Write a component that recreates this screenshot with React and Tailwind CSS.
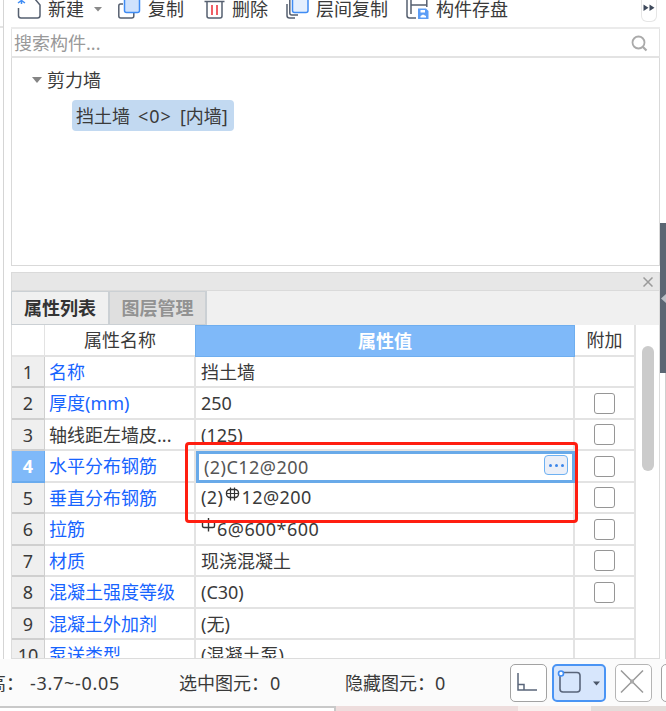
import clsx from "clsx";

const rows = [
    { id: 1, name: "名称", value: "挡土墙", link: true },
    { id: 2, name: "厚度(mm)", value: "250", link: true, check: true },
    { id: 3, name: "轴线距左墙皮...", value: "(125)", check: true },
    { id: 4, name: "水平分布钢筋", value: "(2)C12@200", link: true, check: true, editing: true },
    { id: 5, name: "垂直分布钢筋", prefix: "(2)", bar: "C", value: "12@200", link: true, check: true },
    { id: 6, name: "拉筋", bar: "A", value: "6@600*600", link: true, check: true },
    { id: 7, name: "材质", value: "现浇混凝土", link: true, check: true },
    { id: 8, name: "混凝土强度等级", value: "(C30)", link: true, check: true },
    { id: 9, name: "混凝土外加剂", value: "(无)", link: true },
    { id: 10, name: "泵送类型", value: "(混凝土泵)", link: true },
];

// rebar grade symbol, A is plain round bar and C is ribbed
function RebarIcon({ type }) {
    return (
        <svg width="15" height="16" viewBox="0 0 15 16" fill="none" stroke="#333" strokeWidth="1.4" className="mb-[7px] mr-px shrink-0">
            {type === "C" ? (
                <>
                    <rect x="1.500" y="3.500" width="12" height="8" rx="3.500" />
                    <path d="M5.5 1.500v13M9.500 1.500v13M1 7.500h13" strokeWidth="1.2" />
                </>
            ) : (
                <>
                    <path d="M1.500 4.500h12V9q0 1.500-1.500 1.500H3Q1.500 10.500 1.500 9z" />
                    <path d="M7.500 1v13.500" />
                </>
            )}
        </svg>
    );
}

function Toolbar() {
    return (
        <div className="flex h-[29px] shrink-0 items-start border-b-2 border-[#ebebeb] leading-[18px]">
            <svg width="24" height="20" className="ml-[6px] shrink-0" fill="none" stroke="#566070" strokeWidth="1.5">
                <path d="M1.5 8v7.500q0 2.500 2.500 2.500H20.500q2.500 0 2.500-2.500V5L18-1H12" />
                <path d="M4.500-4v8M1-2l7 5M8-2L1 3" stroke="#3f8cf4" />
            </svg>
            <span className="ml-[7px] w-[37px]">新建</span>
            <svg width="8" height="20" className="ml-[9px] shrink-0" fill="#8a8a8a">
                <path d="M0 7h8l-4 4.500z" />
            </svg>
            <svg width="24" height="20" className="ml-[16px] shrink-0" fill="none" strokeWidth="1.500">
                <path d="M5 4H2.500Q.8 4 .8 6v10q0 2 2 2h11q2 0 2-2v-3" stroke="#566070" />
                <rect x="6.500" y="-4" width="15" height="16.500" rx="2" fill="#cfe2fd" stroke="#3f8cf4" />
            </svg>
            <span className="ml-[6px] w-[37px]">复制</span>
            <svg width="22" height="20" className="ml-[19px] shrink-0" fill="none" stroke="#566070" strokeWidth="1.500">
                <path d="M.5 1.500h20M3 1.500V16q0 2 2 2h11q2 0 2-2V1.500" />
                <path d="M8 5v10M13 5v10" stroke="#ec2b34" />
            </svg>
            <span className="ml-[6px] w-[37px]">删除</span>
            <svg width="24" height="20" className="ml-[17px] shrink-0" fill="none" strokeWidth="1.500">
                <path d="M1 4v11.500Q1 18 3.500 18H9M3.800 0v13q0 2 2 2H12" stroke="#566070" />
                <rect x="6.500" y="-4" width="15.500" height="16.500" rx="2" fill="#e4effe" stroke="#3f8cf4" />
            </svg>
            <span className="ml-[6px] w-[73px]">层间复制</span>
            <svg width="24" height="20" className="ml-[17px] shrink-0" fill="none" stroke="#566070" strokeWidth="1.500">
                <path d="M1 0v15.500Q1 18 3.500 18H10M5 0v14M5 5h15.500M20.800 0v7" />
                <path d="M12 8.500h8l2.500 2.500v8H12z" fill="#5c9df6" stroke="none" />
                <path d="M14.500 10h4.500v2.500h-4.500zM14.500 17.500v-1.500l2.500-1.500 3 1.500v1.500z" fill="#fff" stroke="none" />
            </svg>
            <span className="ml-[6px] w-[73px]">构件存盘</span>
            <div className="ml-auto mr-[3px] h-[22px] w-[16px] rounded-b-md border border-t-0 border-[#e6e6e6]">
                <svg width="14" height="20" fill="#3f4a5c">
                    <path d="M1.500 4.500v6.500l5-3.200zM7.500 4.500v6.500l5-3.200z" />
                </svg>
            </div>
        </div>
    );
}

function Row({ row }) {
    return (
        <div className="flex h-[31.5px] shrink-0">
            <div
                className={clsx(
                    "flex w-[33px] shrink-0 items-center justify-center border-b-2 border-r pt-px",
                    row.editing
                        ? "border-[#6aabee] bg-[#7fb9f9] font-bold text-white"
                        : "border-[#cfcfcf] bg-[#efefef]"
                )}
            >
                {row.id}
            </div>
            <div
                className={clsx(
                    "flex w-[151px] shrink-0 items-center whitespace-nowrap border-b-2 border-r-2 border-[#e3e3e3] pl-[4px] pt-px",
                    row.link && "text-[#1764ff]"
                )}
            >
                {row.name}
            </div>
            {row.editing ? (
                <div className="flex w-[379px] shrink-0 items-center justify-between border-[3px] border-[#69aae9] pl-[5px] pr-[4px] tracking-[0.45px] text-[#555]">
                    {row.value}
                    <button className="mb-[3px] flex h-[20px] w-[24px] items-center justify-center gap-[3px] rounded-[4px] border-[1.5px] border-[#6eb1f2] bg-[#ebeff8]">
                        <span className="size-[3px] rounded-full bg-[#3c86ea]" />
                        <span className="size-[3px] rounded-full bg-[#3c86ea]" />
                        <span className="size-[3px] rounded-full bg-[#3c86ea]" />
                    </button>
                </div>
            ) : (
                <div
                    className={clsx(
                        "flex w-[379px] shrink-0 items-center border-b-2 border-r-2 border-[#e3e3e3] pl-[5px]",
                        row.bar ? "tracking-[0.45px]" : "pt-px"
                    )}
                >
                    {row.prefix && <span className="mr-[2px]">{row.prefix}</span>}
                    {row.bar && <RebarIcon type={row.bar} />}
                    {row.value}
                </div>
            )}
            <div className="flex w-[61px] shrink-0 items-center justify-center border-b-2 border-r-2 border-[#e3e3e3] pt-px">
                {row.check && <span className="size-[21px] rounded-[3px] border-[1.5px] border-[#969696] bg-white" />}
            </div>
        </div>
    );
}

function PropertyTable() {
    return (
        <div className="flex min-h-0 flex-1 overflow-hidden border-b border-l border-[#dcdcdc]">
            <div className="flex w-[624px] shrink-0 flex-col">
                <div className="flex h-[31.5px] shrink-0">
                    <div className="w-[33px] border-b-2 border-r border-[#e3e3e3]" />
                    <div className="flex w-[150px] items-center justify-center border-b-2 border-[#e3e3e3] pt-px">属性名称</div>
                    <div className="flex w-[380px] items-center justify-center border border-[#6faeef] bg-[#7fb9f9] font-bold text-white">
                        属性值
                    </div>
                    <div className="flex w-[61px] items-center justify-center border-b-2 border-r-2 border-[#e3e3e3] pt-px">附加</div>
                </div>
                {rows.map((row) => (
                    <Row key={row.id} row={row} />
                ))}
            </div>
            <div className="flex-1 border-r border-[#dcdcdc] pl-[6px] pt-[21px]">
                <div className="h-[125px] w-[12px] rounded-full bg-[#cbcbcb]" />
            </div>
        </div>
    );
}

function StatusBar() {
    return (
        <div className="flex h-[47px] shrink-0 items-center overflow-hidden whitespace-nowrap bg-[#fbfbfb]">
            <span className="-ml-[12px] w-[42px] shrink-0">高：</span>
            <span className="w-[149px] shrink-0 tracking-[0.7px]">-3.7~-0.05</span>
            <span className="w-[91px] shrink-0">选中图元：</span>
            <span className="w-[75px] shrink-0">0</span>
            <span className="w-[90px] shrink-0">隐藏图元：</span>
            <span className="w-[75px] shrink-0">0</span>
            <button className="h-[38px] w-[37px] shrink-0 rounded-[5px] border-[1.5px] border-[#a2a2a2] bg-white">
                <svg width="34" height="35" fill="none" stroke="#59657a" strokeWidth="1.500">
                    <path d="M7 8v17h19M7 19.500h6V25" />
                </svg>
            </button>
            <button className="ml-[5px] h-[38px] w-[54px] shrink-0 rounded-[5px] border-2 border-[#4a94f4] bg-[#d7e6fc]">
                <svg width="50" height="34" fill="none" stroke="#59657a" strokeWidth="1.600">
                    <rect x="6" y="6.500" width="20" height="19.500" rx="3" />
                    <circle cx="7" cy="7.500" r="2.500" fill="#fff" stroke="#3f8cf4" />
                    <path d="M39 15.500h7l-3.500 4z" fill="#4b5668" stroke="none" />
                </svg>
            </button>
            <button className="ml-[9px] h-[38px] w-[37px] shrink-0 rounded-[5px] border-[1.5px] border-[#b5b5b5] bg-white">
                <svg width="34" height="35" fill="none" stroke="#999" strokeWidth="1.500">
                    <path d="M5 5.500l22 22M27 5.500l-22 22" />
                    <rect x="14" y="14.500" width="4" height="4" fill="#aaa" stroke="none" />
                </svg>
            </button>
            <div className="ml-[9px] h-[38px] w-[37px] shrink-0 rounded-[5px] border-[1.5px] border-[#a2a2a2] bg-white" />
        </div>
    );
}

export default function App() {
    return (
        <div className="relative flex h-[711px] w-[666px] flex-col overflow-hidden bg-white font-['Noto_Sans','Noto_Sans_CJK_SC',sans-serif] text-[18px] leading-[26px] text-[#3a3a3a]">
            <div className="flex h-[659px] shrink-0">
                {/* edge of the panel on the left */}
                <div className="w-[4px] shrink-0 border-r border-[#d5d5d5]">
                    <div className="h-[28px] border-b-2 border-[#e3e3e3]" />
                </div>

                <div className="ml-[7px] flex w-[649px] shrink-0 flex-col">
                    <Toolbar />

                    <div className="flex h-[29px] shrink-0 items-center justify-between border-b-2 border-l border-r border-[#e3e3e3] pl-[2px] pr-[11px] pt-px text-[#999]">
                        <span>搜索构件...</span>
                        <svg width="17" height="17" fill="none" stroke="#aaa" strokeWidth="1.800">
                            <circle cx="7.500" cy="7.500" r="6" />
                            <path d="M12 12l3.500 3.500" strokeWidth="2.200" />
                        </svg>
                    </div>

                    <div className="h-[208px] shrink-0 border-b border-l border-r border-[#d9d9d9] pt-[9px]">
                        <div className="flex items-center pl-[20px]">
                            <svg width="10" height="6" fill="#858585">
                                <path d="M0 0h10l-5 6z" />
                            </svg>
                            <span className="ml-[5px]">剪力墙</span>
                        </div>
                        <div className="ml-[60px] mt-[7px] flex h-[31px] w-[162px] items-center gap-[8px] whitespace-nowrap rounded-[4px] bg-[#c2d9f1] pl-[4px]">
                            <span>挡土墙</span>
                            <span className="tracking-[1px]">&lt;0&gt;</span>
                            <span>[内墙]</span>
                        </div>
                    </div>

                    <div className="mt-[6px] flex h-[19px] shrink-0 items-center justify-end border border-[#dadada] bg-[#e7e7e7] pr-[6px]">
                        <svg width="10" height="10" stroke="#9a9a9a" strokeWidth="1.500">
                            <path d="M.5.5l9 9M9.500.5l-9 9" />
                        </svg>
                    </div>

                    <div className="flex h-[34px] shrink-0 border-r border-[#dcdcdc] bg-[#f0f0f0]">
                        <div className="flex w-[98px] items-center justify-center border border-[#cbd0d4] bg-[#f0f0f0] font-bold text-[#333]">
                            属性列表
                        </div>
                        <div className="flex w-[98px] items-center justify-center border border-r-2 border-[#cbd0d4] bg-[#dfdfdf] font-bold text-[#929292]">
                            图层管理
                        </div>
                    </div>

                    <PropertyTable />
                </div>

                {/* collapsed side panel handle */}
                <div className="flex flex-1 flex-col pt-[223px]">
                    <div className="flex h-[150px] items-center justify-end bg-[#5b6673]">
                        <svg width="5" height="9" fill="#b9bec5">
                            <path d="M5 0v9L0 4.500z" />
                        </svg>
                    </div>
                    <div className="flex-1 border-r border-[#cfcfcf]" />
                </div>
            </div>

            <StatusBar />

            <div className="flex flex-1">
                <div className="w-[336px] border-r-2 border-t-2 border-[#c9c9c9]" />
                <div className="w-[182px] bg-[#eedddd]" />
                <div className="w-[73px] bg-[#f8f0ee]" />
                <div className="flex-1 bg-[#e3ddda]" />
            </div>

            {/* callout around the two rebar rows */}
            <div className="absolute left-[185px] top-[442px] h-[81px] w-[393px] rounded-[4px] border-[3px] border-[#ff1e10]" />
        </div>
    );
}
